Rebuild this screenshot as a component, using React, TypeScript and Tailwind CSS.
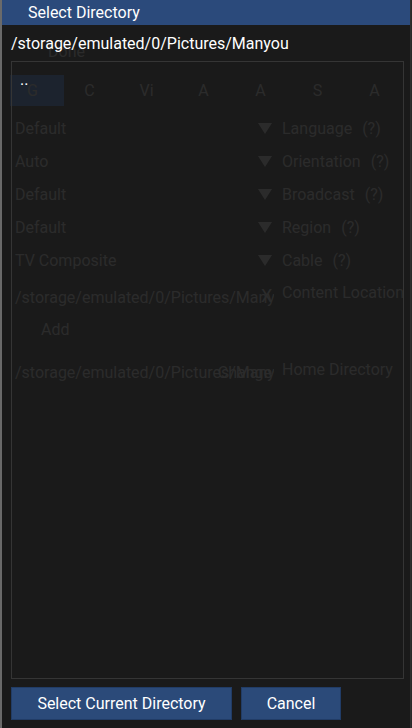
import React from "react";

const Tri = () => (
  <svg width="14" height="11" viewBox="0 0 14 11" className="block">
    <polygon points="0,0 14,0 7,11" fill="currentColor" />
  </svg>
);

const rows = [
  { v: "Default", l: "Language" },
  { v: "Auto", l: "Orientation" },
  { v: "Default", l: "Broadcast" },
  { v: "Default", l: "Region" },
  { v: "TV Composite", l: "Cable" },
];

const tabs = ["G", "C", "Vi", "A", "A", "S", "A"];

export default function App() {
  return (
    <div className="relative h-[728px] w-[412px] overflow-hidden bg-[#282828] font-['Roboto',sans-serif]">
      {/* underlying page */}
      <div className="flex h-full flex-col border-l-2 border-[#6a6a6a] text-[16px] leading-[20px] text-[#b4b4b4]">
        <div className="h-[75px] shrink-0 pl-[46px] pt-[42px]">Done</div>
        <div className="relative h-[31px] shrink-0">
          <div className="absolute left-[8px] top-0 h-[31px] w-[54px] bg-[#3d76c8]" />
          <div className="relative ml-[2px] grid h-full w-[399px] grid-cols-7 items-center text-center">
            {tabs.map((t, i) => (
              <div key={i}>{t}</div>
            ))}
          </div>
        </div>
        <div className="pt-[6px]">
          {rows.map((r, i) => (
            <div key={i} className="flex h-[33px] items-center">
              <div className="w-[272px] shrink-0 overflow-hidden whitespace-nowrap pl-[13px]">{r.v}</div>
              <div className="-ml-[16px] flex w-[24px] shrink-0 items-center">
                <Tri />
              </div>
              <div className="whitespace-nowrap">
                {r.l}
                <span className="ml-[10px]">(?)</span>
              </div>
            </div>
          ))}
          <div className="flex h-[42px] items-start">
            <div className="w-[272px] shrink-0 overflow-hidden whitespace-nowrap pl-[13px] pt-[11px]">
              /storage/emulated/0/Pictures/Manyou
            </div>
            <div className="-ml-[13px] w-[21px] shrink-0 pt-[9px] text-[18px]">X</div>
            <div className="whitespace-nowrap pt-[6px]">Content Location</div>
          </div>
          <div className="h-[31px] pl-[39px] pt-[1px]">Add</div>
          <div className="flex h-[40px] items-start">
            <div className="relative w-[272px] shrink-0 overflow-hidden whitespace-nowrap pl-[13px] pt-[13px]">
              /storage/emulated/0/Pictures/Manyou
              <span className="absolute right-[2px] top-[13px]">Change</span>
            </div>
            <div className="ml-[8px] whitespace-nowrap pt-[10px]">Home Directory</div>
          </div>
        </div>
      </div>

      {/* dialog overlay */}
      <div className="absolute bottom-0 left-[2px] right-[1px] top-0 flex flex-col border-r border-[#2e2e2e] bg-[rgba(24,24,24,0.88)]">
        <div className="h-[25px] shrink-0 bg-[#2b4a7b] pl-[26px] text-[16px] leading-[25px] text-white">
          Select Directory
        </div>
        <div className="shrink-0 pl-[9px] pt-[9px] text-[16px] leading-[20px] text-white">
          /storage/emulated/0/Pictures/Manyou
        </div>
        <div className="ml-[9px] mt-[7px] h-[618px] w-[393px] shrink-0 border border-[#353535] px-[8px] pt-[8px]">
          <div className="text-[16px] leading-[20px] text-white">..</div>
        </div>
        <div className="mt-[8px] flex shrink-0 gap-[9px] pl-[9px]">
          <button className="h-[33px] w-[221px] border border-[#213c66] bg-[#2b4a79] text-[16px] text-white">
            Select Current Directory
          </button>
          <button className="h-[33px] w-[100px] border border-[#213c66] bg-[#2b4a79] text-[16px] text-white">
            Cancel
          </button>
        </div>
      </div>
    </div>
  );
}
